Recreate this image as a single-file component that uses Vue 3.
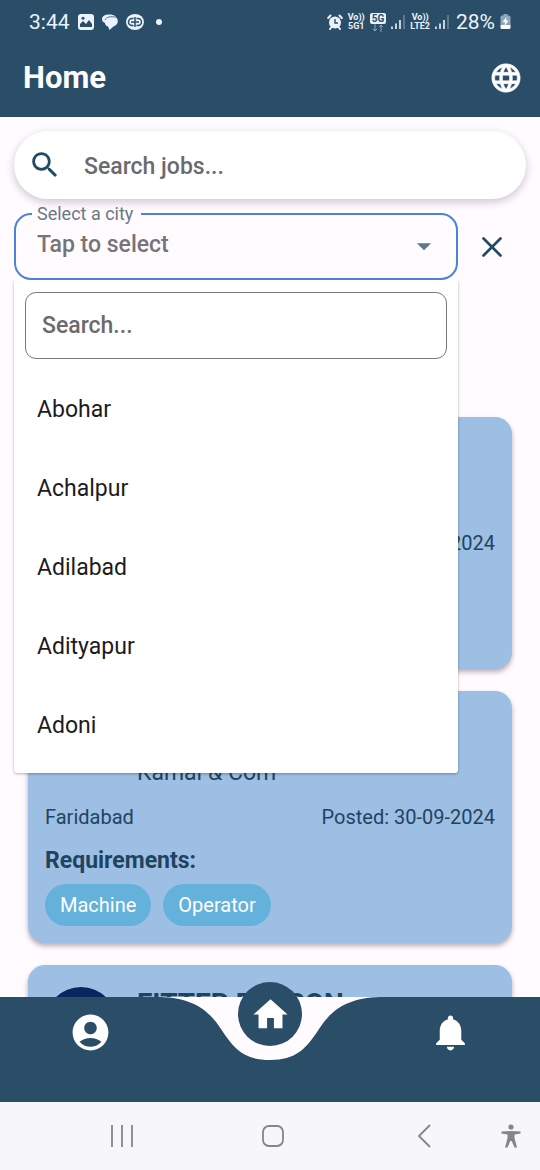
<script setup>
import { ref } from 'vue'

const keyword = ref('')
const cityFilter = ref('')
const city = ref('')

const cities = ['Abohar', 'Achalpur', 'Adilabad', 'Adityapur', 'Adoni']

const jobs = [
  { id: 1, posted: '30-09-2024' },
  {
    id: 2,
    company: 'Kamal & Com',
    place: 'Faridabad',
    posted: '30-09-2024',
    requirements: ['Machine', 'Operator'],
  },
  { id: 3, title: 'FITTER PERSON', logo: true },
]
</script>

<template>
  <div class="screen">
    <header class="top">
      <div class="status">
        <div class="status-group">
          <span class="clock">3:44</span>
          <svg width="16" height="16" viewBox="0 0 16 16">
            <rect width="16" height="16" rx="3" fill="#eaf3fb" />
            <path d="M2 13V10L5 7l3 3 3-4 3 4v3z" fill="#2b4e68" />
            <circle cx="5" cy="4.300" r="1.500" fill="#2b4e68" />
          </svg>
          <svg width="16" height="16" viewBox="0 0 16 16">
            <path d="M0 5C0 1 5 0 9 .5c3 .3 4.500 1.500 4.800 2.700C17 5 16.500 11 11.500 12.500L7.500 16 6 12.500C4 12 3 10.500 3 9 1 8 0 7 0 5z" fill="#eaf3fb" />
            <path d="M3 6C4 3 9 2 13.500 3.200" fill="none" stroke="#2b4e68" stroke-width=".8" />
          </svg>
          <svg width="18" height="16" viewBox="0 0 18 16">
            <ellipse cx="9" cy="8" rx="9" ry="8" fill="#eaf3fb" />
            <path d="M7.500 4.500H6a3.500 3.500 0 0 0 0 7h1.500M10.500 4.500H12a3.500 3.500 0 0 1 0 7h-1.500M5 8h8M9 3v10" fill="none" stroke="#2b4e68" stroke-width="1.500" />
          </svg>
          <span class="dot"></span>
        </div>
        <div class="status-group right">
          <svg width="16" height="16" viewBox="0 0 16 16">
            <circle cx="8" cy="8.500" r="6" fill="#eaf3fb" />
            <path d="M1.200 4 3.500 1.500M14.800 4 12.500 1.500M3 15l2-2.500M13 15l-2-2.500" stroke="#eaf3fb" stroke-width="2" stroke-linecap="round" />
            <path d="M8 5v4h3" fill="none" stroke="#2b4e68" stroke-width="1.400" />
          </svg>
          <span class="net"><b>Vo))</b><b>5G1</b></span>
          <span class="net"><b class="badge">5G</b>
            <svg width="12" height="8" viewBox="0 0 12 8"><path d="M3 0v7M1 5l2 2 2-2M9 8V1M7 3l2-2 2 2" fill="none" stroke="#8fa6b8" /></svg>
          </span>
          <svg width="14" height="16" viewBox="0 0 14 16"><path d="M1 12.500V15M5 9.500V15M9 6v9" stroke="#eaf3fb" stroke-width="1.600" /><path d="M13 1v14" stroke="#718a9f" stroke-width="1.400" /></svg>
          <span class="net"><b>Vo))</b><b>LTE2</b></span>
          <svg width="14" height="16" viewBox="0 0 14 16"><path d="M1 12.500V15M5 9.500V15M9 6v9" stroke="#eaf3fb" stroke-width="1.600" /><path d="M13 1v14" stroke="#718a9f" stroke-width="1.400" /></svg>
          <span class="battery">28%</span>
          <svg width="11" height="16" viewBox="0 0 10 16">
            <path d="M3 0h4v1.500h1.500A1.500 1.500 0 0 1 10 3v8H0V3a1.500 1.500 0 0 1 1.500-1.500H3z" fill="#8ea7b9" />
            <path d="M0 11h10v2.500a1.500 1.500 0 0 1-1.500 1.500h-7A1.500 1.500 0 0 1 0 13.500z" fill="#fff" />
            <path d="M6 3 2 8h2.500L4 12l4-5.500H5.500z" fill="#fff" />
          </svg>
        </div>
      </div>
      <div class="appbar">
        <h1>Home</h1>
        <button class="icon-button" aria-label="Language">
          <svg width="34" height="34" viewBox="0 0 24 24" fill="#fff"><path d="M11.990 2C6.470 2 2 6.480 2 12s4.470 10 9.990 10C17.520 22 22 17.520 22 12S17.520 2 11.990 2zm6.930 6h-2.950c-.32-1.250-.78-2.450-1.380-3.560 1.840.63 3.370 1.910 4.330 3.560zM12 4.040c.83 1.200 1.480 2.530 1.910 3.960h-3.820c.43-1.430 1.080-2.760 1.910-3.960zM4.260 14C4.100 13.360 4 12.690 4 12s.1-1.360.26-2h3.380c-.08.66-.14 1.320-.14 2s.06 1.340.14 2H4.260zm.82 2h2.950c.32 1.250.78 2.450 1.380 3.560-1.840-.63-3.370-1.900-4.330-3.560zm2.950-8H5.080c.96-1.660 2.490-2.930 4.330-3.560C8.810 5.550 8.350 6.750 8.030 8zM12 19.960c-.83-1.200-1.480-2.530-1.910-3.960h3.820c-.43 1.430-1.080 2.760-1.910 3.960zM14.340 14H9.660c-.09-.66-.16-1.320-.16-2s.07-1.350.16-2h4.680c.09.65.16 1.320.16 2s-.07 1.340-.16 2zm.25 5.560c.6-1.110 1.060-2.310 1.380-3.560h2.950c-.96 1.650-2.490 2.930-4.330 3.560zM16.360 14c.08-.66.14-1.320.14-2s-.06-1.340-.14-2h3.380c.16.64.26 1.310.26 2s-.1 1.360-.26 2h-3.380z" stroke="#fff" stroke-width=".4" /></svg>
        </button>
      </div>
    </header>

    <main class="content">
      <label class="search">
        <svg width="34" height="34" viewBox="0 0 24 24" fill="#234a64"><path d="M15.500 14h-.79l-.28-.27C15.410 12.590 16 11.110 16 9.500 16 5.910 13.090 3 9.500 3S3 5.910 3 9.500 5.910 16 9.500 16c1.610 0 3.090-.59 4.230-1.570l.27.28v.79l5 4.990L20.490 19l-4.990-5zm-6 0C7.010 14 5 11.990 5 9.500S7.010 5 9.500 5 14 7.010 14 9.500 11.990 14 9.500 14z" /></svg>
        <input v-model="keyword" type="text" aria-label="Search jobs" placeholder="Search jobs..." />
      </label>

      <div class="filter">
        <div class="city">
          <label for="city">Select a city</label>
          <select id="city" v-model="city">
            <option value="">Tap to select</option>
            <option v-for="name in cities" :key="name">{{ name }}</option>
          </select>
          <svg class="arrow" width="34" height="34" viewBox="0 0 24 24" fill="#5f7887"><path d="m7 10 5 5 5-5z" /></svg>
          <div class="menu">
            <input v-model="cityFilter" type="text" aria-label="Search cities" placeholder="Search..." />
            <ul>
              <li v-for="name in cities" :key="name">
                <button @click="city = name">{{ name }}</button>
              </li>
            </ul>
          </div>
        </div>
        <button class="icon-button clear" aria-label="Clear city" @click="city = ''">
          <svg width="34" height="34" viewBox="0 0 24 24"><path d="M6 6l12 12M18 6 6 18" stroke="#234a64" stroke-width="1.900" stroke-linecap="round" /></svg>
        </button>
      </div>

      <section class="jobs">
        <article v-for="job in jobs" :key="job.id" class="card">
          <div class="card-head">
            <span class="logo" :class="{ filled: job.logo }"></span>
            <div class="names">
              <h2>{{ job.title }}</h2>
              <p>{{ job.company }}</p>
            </div>
          </div>
          <div class="meta">
            <span>{{ job.place }}</span>
            <span v-if="job.posted">Posted: {{ job.posted }}</span>
          </div>
          <template v-if="job.requirements">
            <h3>Requirements:</h3>
            <div class="chips">
              <span v-for="item in job.requirements" :key="item">{{ item }}</span>
            </div>
          </template>
        </article>
      </section>
    </main>

    <nav class="tabs">
      <svg class="notch" width="220" height="64" viewBox="0 0 220 64" fill="#fffbff"><path d="M0 0C32 1 48 12 61 32S84 63 110 63s36-11 49-31S188 1 220 0z" /></svg>
      <button class="icon-button" aria-label="Profile">
        <svg width="43" height="43" viewBox="0 0 24 24" fill="#fff"><path d="M12 2C6.480 2 2 6.480 2 12s4.480 10 10 10 10-4.480 10-10S17.520 2 12 2zm0 4c1.930 0 3.500 1.570 3.500 3.500S13.930 13 12 13s-3.500-1.570-3.500-3.500S10.070 6 12 6zm0 14c-2.030 0-4.430-.82-6.140-2.880C7.550 15.800 9.680 15 12 15s4.450.8 6.140 2.120C16.430 19.180 14.030 20 12 20z" /></svg>
      </button>
      <button class="home" aria-label="Home">
        <svg width="41" height="41" viewBox="0 0 24 24" fill="#fff"><path d="M10 20v-6h4v6h5v-8h3L12 3 2 12h3v8z" /></svg>
      </button>
      <button class="icon-button" aria-label="Notifications">
        <svg width="43" height="43" viewBox="0 0 24 24" fill="#fff"><path d="M12 22c1.100 0 2-.9 2-2h-4c0 1.100.89 2 2 2zm6-6v-5c0-3.070-1.640-5.640-4.500-6.320V4c0-.83-.67-1.500-1.500-1.500s-1.500.67-1.500 1.500v.68C7.630 5.360 6 7.920 6 11v5l-2 2v1h16v-1l-2-2z" /></svg>
      </button>
    </nav>

    <footer class="system">
      <button aria-label="Recent apps"><svg width="24" height="24" viewBox="0 0 24 24"><path d="M2 1v22M12 1v22M22 1v22" stroke="#858588" stroke-width="1.800" /></svg></button>
      <button aria-label="Home screen"><svg width="24" height="24" viewBox="0 0 24 24"><rect x="2" y="2" width="20" height="20" rx="6" fill="none" stroke="#858588" stroke-width="1.800" /></svg></button>
      <button aria-label="Back"><svg width="24" height="24" viewBox="0 0 24 24"><path d="M18 1 7 12l11 11" fill="none" stroke="#858588" stroke-width="1.800" /></svg></button>
      <button class="access" aria-label="Accessibility"><svg width="24" height="24" viewBox="0 0 24 24" fill="#858588"><circle cx="12" cy="3" r="2.600" /><path d="M2.500 7.500 12 7l9.500.5v2L15.500 10.500V14l2.500 9.500h-2.500L12.700 17h-1.400L8.500 23.500H6L8.500 14v-3.500L2.500 9.500z" /></svg></button>
    </footer>
  </div>
</template>

<style>
body {
  background: #fffbff;
}
</style>

<style scoped>
* {
  box-sizing: border-box;
}
.screen {
  display: flex;
  flex-direction: column;
  height: 100vh;
  font-family: Roboto, 'Liberation Sans', sans-serif;
  background: #fffbff;
}
svg {
  display: block;
  flex: none;
}
h1, h2, h3, p, ul {
  margin: 0;
  padding: 0;
}
button {
  padding: 0;
  border: 0;
  background: none;
  font: inherit;
  color: inherit;
}
.icon-button {
  display: grid;
  place-items: center;
}
.top {
  background: #2b4e68;
  color: #fff;
}
.status {
  display: flex;
  justify-content: space-between;
  height: 44px;
  padding: 0 29px;
  color: #eaf3fb;
}
.status-group {
  display: flex;
  align-items: center;
  gap: 8px;
}
.right {
  gap: 5px;
}
.clock, .battery {
  font-size: 21px;
  line-height: 24px;
}
.battery {
  margin-left: 2px;
}
.dot {
  width: 6px;
  height: 6px;
  margin-left: 4px;
  border-radius: 50%;
  background: #eaf3fb;
}
.net {
  display: flex;
  flex-direction: column;
  align-items: center;
  font-size: 9px;
  line-height: 9px;
}
.badge {
  padding: 0 2px;
  border-radius: 2px;
  background: #eaf3fb;
  color: #2b4e68;
  font-size: 10px;
  line-height: 11px;
}
.appbar {
  display: flex;
  align-items: center;
  justify-content: space-between;
  height: 73px;
  padding: 0 17px 6px 23px;
}
h1 {
  font-size: 31px;
  line-height: 36px;
  font-weight: 700;
}
.content {
  flex: 1;
  min-height: 0;
  padding: 14px 14px 0;
  overflow: hidden;
}
.search {
  display: flex;
  align-items: center;
  gap: 20px;
  height: 68px;
  padding: 0 14px;
  border-radius: 34px;
  background: #fff;
  box-shadow: 0 3px 8px rgba(60, 40, 60, 0.25);
}
input {
  min-width: 0;
  border: 0;
  outline: 0;
  background: none;
  font: 500 23px/28px Roboto, 'Liberation Sans', sans-serif;
  color: #1d1b20;
}
input::placeholder {
  color: #6b6a6c;
  opacity: 1;
}
.search input {
  flex: 1;
  padding: 4px 2px 0;
}
.filter {
  display: flex;
  margin-top: 14px;
}
.city {
  position: relative;
  flex: 1;
}
.city label {
  position: absolute;
  top: -9px;
  left: 18px;
  padding: 0 8px 0 5px;
  background: linear-gradient(#fffbff, #fffbff) center / 100% 4px no-repeat;
  font-size: 18px;
  line-height: 20px;
  color: #6c7884;
}
.city select {
  display: block;
  width: 100%;
  height: 67px;
  padding: 0 50px 4px 21px;
  border: 2px solid #4a82dc;
  border-radius: 17px;
  outline: 0;
  appearance: none;
  background: transparent;
  font: 500 23px/28px Roboto, 'Liberation Sans', sans-serif;
  color: #777479;
}
.arrow {
  position: absolute;
  top: 16px;
  right: 17px;
  pointer-events: none;
}
.clear {
  width: 68px;
}
.menu {
  position: absolute;
  top: 100%;
  left: 0;
  right: 0;
  z-index: 1;
  padding: 12px 11px 8px;
  border-radius: 0 0 3px 3px;
  background: #fff;
  box-shadow: 0 1px 3px rgba(0, 0, 0, 0.3);
  clip-path: inset(0 -6px -8px);
}
.menu input {
  display: block;
  width: 100%;
  height: 67px;
  padding: 0 16px;
  border: 1px solid #79777b;
  border-radius: 11px;
}
.menu ul {
  margin-top: 11px;
  list-style: none;
}
.menu li button {
  display: block;
  width: 100%;
  height: 79px;
  padding: 0 12px;
  font-size: 23px;
  text-align: left;
  color: #1d1b20;
}
.jobs {
  display: flex;
  flex-direction: column;
  gap: 22px;
  margin: 137px 14px 0;
}
.card {
  min-height: 252px;
  padding: 20px 17px 17px;
  border-radius: 17px;
  background: #9cbfe3;
  box-shadow: 0 3px 5px rgba(60, 30, 40, 0.35);
  color: #1f4460;
}
.card-head {
  display: flex;
  gap: 20px;
}
.logo {
  width: 72px;
  height: 72px;
  margin-top: 2px;
  border-radius: 50%;
}
.filled {
  background: #0b2560;
}
.names {
  display: grid;
  grid-template-rows: 38px 26px;
  gap: 11px;
}
h2 {
  font-size: 28px;
  line-height: 38px;
  font-weight: 700;
}
.names p {
  font-size: 23px;
  line-height: 26px;
}
.meta {
  display: flex;
  justify-content: space-between;
  margin-top: 19px;
  font-size: 20px;
  line-height: 24px;
}
h3 {
  margin-top: 19px;
  font-size: 23px;
  line-height: 26px;
  font-weight: 700;
}
.chips {
  display: flex;
  gap: 12px;
  margin-top: 10px;
}
.chips span {
  padding: 0 15px;
  border-radius: 21px;
  background: #64b1dc;
  color: #fff;
  font-size: 20px;
  line-height: 42px;
}
.tabs {
  position: relative;
  z-index: 2;
  display: flex;
  justify-content: space-around;
  align-items: flex-start;
  height: 105px;
  padding-top: 14px;
  background: #2b4e68;
}
.tabs .icon-button {
  width: 64px;
}
.notch {
  position: absolute;
  top: 0;
  left: calc(50% - 110px);
}
.home {
  display: grid;
  place-items: center;
  width: 64px;
  height: 64px;
  margin-top: -29px;
  border-radius: 50%;
  background: #2b4e68;
  z-index: 1;
}
.system {
  display: flex;
  align-items: center;
  height: 68px;
  padding: 0 17px 0 47px;
  background: #f7f7fa;
}
.system button {
  display: grid;
  flex: 1;
  place-items: center;
}
.system .access {
  flex: 0 0 24px;
}
</style>
